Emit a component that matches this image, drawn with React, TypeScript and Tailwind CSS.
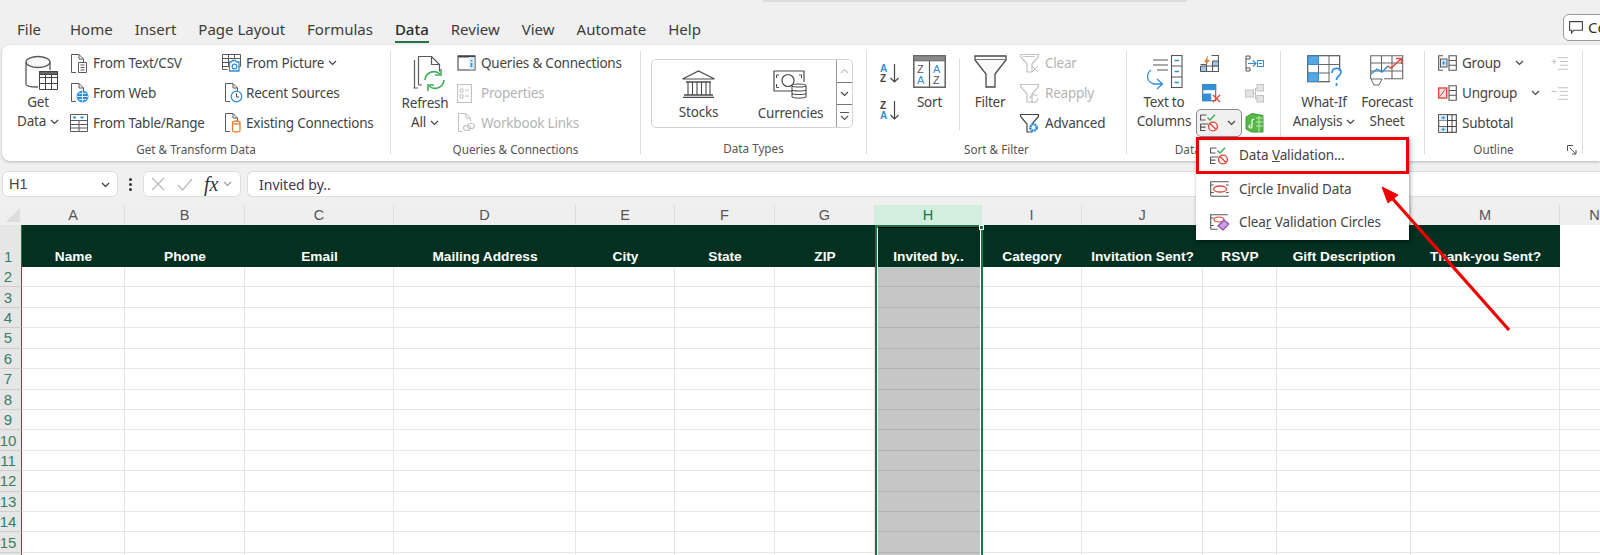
import React from 'react'

const GRAY = '#5a5a5a'
const LIGHT = '#c2c2c2'
const BLUE = '#2f8fd8'

const tabs = ['File', 'Home', 'Insert', 'Page Layout', 'Formulas', 'Data', 'Review', 'View', 'Automate', 'Help']

const columns = [
  { letter: 'A', title: 'Name' },
  { letter: 'B', title: 'Phone' },
  { letter: 'C', title: 'Email' },
  { letter: 'D', title: 'Mailing Address' },
  { letter: 'E', title: 'City' },
  { letter: 'F', title: 'State' },
  { letter: 'G', title: 'ZIP' },
  { letter: 'H', title: 'Invited by..' },
  { letter: 'I', title: 'Category' },
  { letter: 'J', title: 'Invitation Sent?' },
  { letter: 'K', title: 'RSVP' },
  { letter: 'L', title: 'Gift Description' },
  { letter: 'M', title: 'Thank-you Sent?' },
  { letter: 'N', title: '' },
]

const gridCols =
  'grid grid-cols-[22px_103px_120px_149px_182px_99px_100px_100px_107px_100px_121px_74px_134px_149px_70px]'

function Ic({ w, h, children, color = GRAY }: { w: number; h: number; children: React.ReactNode; color?: string }) {
  return (
    <svg width={w} height={h} viewBox={`0 0 ${w} ${h}`} fill="none" stroke={color} strokeWidth="1" className="shrink-0">
      {children}
    </svg>
  )
}

function Chevron({ color = '#444' }: { color?: string }) {
  return (
    <svg width="9" height="6" viewBox="0 0 9 6" fill="none" stroke={color} strokeWidth="1.2" className="shrink-0">
      <path d="M1 1l3.5 3.5L8 1" />
    </svg>
  )
}

const Page = ({ c = GRAY }: { c?: string }) => <path d="M1.5 18.5V.5H9l4.5 4.5v3M9 .5V5h4.5M1.5 18.5H6" stroke={c} />

const GetDataIcon = () => (
  <Ic w={34} h={36}>
    <path d="M1 7v22c0 2 4 3 11 3h1M25 7v8" strokeWidth="1.3" />
    <ellipse cx="13" cy="7" rx="12" ry="5.5" strokeWidth="1.3" fill="#f8f8f8" />
    <path d="M14.5 16.5h18v18h-18zM14.5 22.5h18M14.5 28.5h18M20.5 16.5v18M26.5 16.5v18" stroke="#444" fill="#fff" />
    <path d="M14.5 16.5h18v3h-18z" fill="#666" stroke="#444" />
  </Ic>
)
const FromTextIcon = () => (
  <Ic w={19} h={19}>
    <Page />
    <path d="M8.5 8.5h8v10h-8zM10.5 11h4M10.5 13.5h4M10.5 16h4" fill="#fff" />
  </Ic>
)
const FromWebIcon = () => (
  <Ic w={19} h={20}>
    <Page />
    <circle cx="12.5" cy="13.5" r="5.5" fill={BLUE} stroke={BLUE} />
    <path d="M7 13.5h11M12.5 8v11M9 10.5h7M9 16.5h7" stroke="#fff" strokeWidth="0.8" />
  </Ic>
)
const FromTableIcon = () => (
  <Ic w={18} h={18}>
    <path d="M.5.5h17v17H.5zM.5 6.5h17M.5 10.5h17M.5 14h17M9 6.5v11" />
    <path d="M3 3l1.5 1.5L6 3zM10.5 3L12 4.5 13.5 3z" fill={BLUE} stroke={BLUE} />
  </Ic>
)
const FromPictureIcon = () => (
  <Ic w={20} h={18}>
    <path d="M.5.5h18v12H.5M.5 4.5h18M.5 8.5h6M6.5.5v12M12.5.5v4M.5.5v15h5" />
    <path d="M7.5 8h2l1-1.5h3l1 1.5h2.5v9H7.5z" fill="#fff" stroke={BLUE} strokeWidth="1.3" />
    <circle cx="12.5" cy="12.5" r="2.3" stroke={BLUE} strokeWidth="1.3" />
  </Ic>
)
const RecentIcon = () => (
  <Ic w={19} h={20}>
    <Page />
    <circle cx="12.5" cy="13.5" r="5.3" fill="#fff" stroke={BLUE} strokeWidth="1.2" />
    <path d="M12.5 10.5v3.5h2.5" stroke="#444" />
  </Ic>
)
const ExistingIcon = () => (
  <Ic w={19} h={20}>
    <Page />
    <path d="M8.5 9.5c0-2 7.5-2 7.5 0v8c0 2-7.5 2-7.5 0zM8.5 9.5c0 2 7.5 2 7.5 0" stroke="#e8802c" strokeWidth="1.3" fill="#fff" />
  </Ic>
)
const RefreshIcon = () => (
  <Ic w={33} h={36}>
    <path d="M1.5 32V4M5 32H.5M5.5 29V.5h13l8 8v7M18.5.5v8h8M5.5 29H9" strokeWidth="1.2" />
    <path d="M12 24a9 9 0 0 1 15-6M31 24a9 9 0 0 1-15 6" stroke="#3fae5a" strokeWidth="1.6" />
    <path d="M28 13v6h-6M15 35v-6h6" stroke="#3fae5a" strokeWidth="1.6" />
  </Ic>
)
const QueriesIcon = () => (
  <Ic w={19} h={16}>
    <rect x="1" y="1" width="17" height="14" stroke="#555" strokeWidth="1.2" />
    <path d="M1 1.5h17" stroke="#444" strokeWidth="2" />
    <rect x="12" y="2" width="5.5" height="12.5" fill="#d9eaf7" stroke="none" />
    <path d="M14.5 5v1.5M14.5 8v4" stroke={BLUE} strokeWidth="1.6" />
  </Ic>
)
const PropertiesIcon = () => (
  <Ic w={15} h={19} color={LIGHT}>
    <rect x=".5" y=".5" width="14" height="18" strokeWidth="1.2" />
    <path d="M3 5h3v3H3zM3 11h3v3H3zM8 6h4M8 12h4" />
  </Ic>
)
const LinksIcon = () => (
  <Ic w={19} h={20} color={LIGHT}>
    <Page c={LIGHT} />
    <ellipse cx="10" cy="15" rx="3.5" ry="2.5" strokeWidth="1.2" />
    <ellipse cx="14" cy="13" rx="3.5" ry="2.5" strokeWidth="1.2" />
  </Ic>
)
const StocksIcon = () => (
  <Ic w={33} h={28} color="#4a4a4a">
    <path d="M.5 9L16.5 1l16 8z" strokeWidth="1.2" />
    <path d="M4 12h25M2 25h29M1 27.5h31" strokeWidth="1.3" />
    <path d="M6 12v13M10.5 12v13M15 12v13M19.5 12v13M24 12v13M28 12v13" strokeWidth="1.1" />
  </Ic>
)
const CurrenciesIcon = () => (
  <Ic w={36} h={30} color="#4a4a4a">
    <path d="M24 21H1V1h30v11" strokeWidth="1.2" />
    <path d="M6 5H3.5v3M3.5 14v3.5H6M26 5h2.5v3" />
    <circle cx="15" cy="10.5" r="6" strokeWidth="1.2" />
    <path d="M19 15.5c0-2 14-2 14 0v11c0 2-14 2-14 0zM19 15.5c0 2 14 2 14 0M19 19.5c0 2 14 2 14 0M19 23c0 2 14 2 14 0" fill="#fff" strokeWidth="1.1" />
  </Ic>
)
const SortSmall = ({ top, bottom, topColor, bottomColor }: { top: string; bottom: string; topColor: string; bottomColor: string }) => (
  <Ic w={20} h={21}>
    <text x="0" y="9" fontSize="10" fontFamily="Liberation Sans, sans-serif" fontWeight="700" fill={topColor} stroke="none">{top}</text>
    <text x="0" y="19" fontSize="10" fontFamily="Liberation Sans, sans-serif" fontWeight="700" fill={bottomColor} stroke="none">{bottom}</text>
    <path d="M14.5 1v18M10.5 15l4 4 4-4" stroke="#444" strokeWidth="1.2" />
  </Ic>
)
const SortIcon = () => (
  <Ic w={33} h={33} color="#555">
    <rect x=".8" y=".8" width="31.4" height="31.4" strokeWidth="1.4" />
    <rect x=".8" y=".8" width="31.4" height="5" fill="#8a8a8a" stroke="#666" />
    <path d="M16.5 6v26" strokeWidth="1.2" />
    <text x="4" y="18" fontSize="11" fontFamily="Liberation Sans, sans-serif" fill="#555" stroke="none">Z</text>
    <text x="4" y="29" fontSize="11" fontFamily="Liberation Sans, sans-serif" fill={BLUE} stroke="none">A</text>
    <text x="20" y="18" fontSize="11" fontFamily="Liberation Sans, sans-serif" fill={BLUE} stroke="none">A</text>
    <text x="20" y="29" fontSize="11" fontFamily="Liberation Sans, sans-serif" fill="#555" stroke="none">Z</text>
  </Ic>
)
const FilterIcon = () => (
  <Ic w={33} h={33} color="#4a4a4a">
    <path d="M1 1h31v4L21 19v13h-9V19L1 5z" strokeWidth="1.3" fill="#fafafa" />
    <path d="M1 4.5h31" stroke="#777" strokeWidth="1" />
  </Ic>
)
const Funnel = ({ c }: { c: string }) => <path d="M.5 .5h18v2L12 10v8H7v-8L.5 2.5z" stroke={c} strokeWidth="1.2" />
const ClearIcon = () => (
  <Ic w={20} h={19} color={LIGHT}>
    <Funnel c={LIGHT} />
    <path d="M12 12l6 6M18 12l-6 6M3 2.5l12 0" />
  </Ic>
)
const ReapplyIcon = () => (
  <Ic w={20} h={19} color={LIGHT}>
    <Funnel c={LIGHT} />
    <path d="M10 15a4 4 0 0 1 7-3M18 14a4 4 0 0 1-7 3" strokeWidth="1.2" />
  </Ic>
)
const AdvancedIcon = () => (
  <Ic w={20} h={19}>
    <Funnel c="#444" />
    <circle cx="13.5" cy="13.5" r="3.2" stroke={BLUE} strokeWidth="2.6" strokeDasharray="2 .6" fill="#fff" />
  </Ic>
)
const TextColumnsIcon = () => (
  <Ic w={37} h={36}>
    <path d="M7 5h15M7 10h15M11 15h11" stroke="#555" strokeWidth="1.2" />
    <path d="M5 17c-5 4-5 12 3 14h8M11 26l5.5 5-5.5 5" stroke={BLUE} strokeWidth="1.3" transform="translate(0 -2)" />
    <rect x="25.5" y=".5" width="10.5" height="32" stroke="#555" strokeWidth="1.1" />
    <path d="M25.5 11h10.5M25.5 22h10.5" stroke="#555" />
    <path d="M28.5 5.5h4.5M28.5 16.5h4.5M28.5 27.5h4.5" stroke={BLUE} strokeWidth="1.4" />
  </Ic>
)
const FlashFillIcon = () => (
  <Ic w={19} h={17}>
    <path d="M.5 9.5h6M.5 16.5h18V.5h-7M6.5 6v10.5M12.5 6v10.5M6.5 11h12" strokeWidth="1.1" />
    <path d="M8 .5L4 7h2.5l-1.5 4L10 5H7.5z" fill="#e8802c" stroke="none" />
    <path d="M.5 11h6v5.5H.5zM12.5 6h6v5h-6z" fill="#9cc7ea" stroke="#555" strokeWidth="1" />
  </Ic>
)
const DuplicatesIcon = () => (
  <Ic w={19} h={19}>
    <rect x=".7" y=".7" width="13" height="16" stroke="#555" />
    <rect x=".7" y=".7" width="13" height="5" fill={BLUE} stroke={BLUE} />
    <rect x=".7" y="10" width="8" height="6.7" fill={BLUE} stroke={BLUE} />
    <path d="M11 11l7 7M18 11l-7 7" stroke="#e0473a" strokeWidth="1.4" />
  </Ic>
)
const ValidationIcon = () => (
  <Ic w={19} h={18}>
    <path d="M.5 1h6M.5 1v5h5M.5 10h8M.5 10v6.5h5M.5 13.2h5" stroke="#555" strokeWidth="1.2" />
    <path d="M7.5 3.5l2.5 2.5L15 .7" stroke="#3fae5a" strokeWidth="1.5" />
    <circle cx="13" cy="12.5" r="4.4" stroke="#e0473a" strokeWidth="1.4" fill="#fff" />
    <path d="M10 9.5l6 6" stroke="#e0473a" strokeWidth="1.4" />
  </Ic>
)
const ConsolidateIcon = () => (
  <Ic w={19} h={17}>
    <path d="M5 1H1v15h4M5 1v3H1M5 16v-3H1" stroke="#555" />
    <path d="M3 8.5h8M8 5.5l3 3-3 3" stroke={BLUE} strokeWidth="1.2" />
    <rect x="12.5" y="5.5" width="6" height="6" stroke={BLUE} />
    <path d="M14 8.5h3" stroke={BLUE} />
  </Ic>
)
const RelationshipsIcon = () => (
  <Ic w={19} h={19} color={LIGHT}>
    <rect x=".5" y="6" width="8" height="7" fill="#e4e4e4" />
    <rect x="12" y=".5" width="6.5" height="6.5" fill="#e4e4e4" />
    <rect x="12" y="11.5" width="6.5" height="6.5" fill="#e4e4e4" />
    <path d="M8.5 9.5h2M10.5 4v11h1.5M10.5 4H12" />
  </Ic>
)
const ModelIcon = () => (
  <Ic w={19} h={20}>
    <path d="M1 4l6-3.5 11 2V19H6.5L1 16z" fill="#56b947" stroke="#3c9a38" />
    <path d="M11 5h7M11 9h7M11 13h7M14 3v16" stroke="#d6f0cf" strokeWidth="0.8" />
    <path d="M7 7v6.5a1.5 1.5 0 1 1-1.5-1.5M7 7l2-1" stroke="#fff" strokeWidth="1.2" />
  </Ic>
)
const WhatIfIcon = () => (
  <Ic w={37} h={34}>
    <rect x=".7" y=".7" width="32" height="26" stroke="#555" strokeWidth="1.2" />
    <path d="M11.5.7v26M22 .7v26M.7 9.5h32M.7 18h32" stroke="#666" />
    <rect x="1" y="1" width="10.5" height="8.5" fill="#5aa5e0" stroke={BLUE} />
    <rect x="1" y="18" width="10.5" height="8.5" fill="#5aa5e0" stroke={BLUE} />
    <rect x="23" y="16" width="14" height="18" fill="#fff" stroke="none" />
    <path d="M25 18c0-6 9-6 9-1 0 4-4.5 4-4.5 8M29.5 28v3" stroke={BLUE} strokeWidth="1.7" />
  </Ic>
)
const ForecastIcon = () => (
  <Ic w={34} h={31}>
    <path d="M.7 24V.7h32v23H14M.7 8h32M.7 16h32M11.5.7V16M22 .7v23" stroke="#666" strokeWidth="1.1" />
    <path d="M1 19l6-5 5 3 6-6" stroke={BLUE} strokeWidth="1.4" />
    <path d="M18 11l3 2 10-9M26 3.5h5.5V9" stroke="#e0473a" strokeWidth="1.4" />
    <path d="M1 24h11l-3 6H4z" fill="#fff" stroke="#666" />
  </Ic>
)
const GroupIcon = () => (
  <Ic w={19} h={16}>
    <path d="M11 .7h7.3v14.6H11zM11 5.5h7.3M11 10.3h7.3M5 .7H.7v14.6H5" stroke="#555" strokeWidth="1.1" />
    <rect x="2.5" y="4" width="6.5" height="8" fill="#d8e8f5" stroke="#555" />
    <path d="M4 8h3.5M5.7 6v4" stroke={BLUE} />
  </Ic>
)
const UngroupIcon = () => (
  <Ic w={19} h={16}>
    <path d="M11 .7h7.3v14.6H11zM11 5.5h7.3M11 10.3h7.3" stroke="#555" strokeWidth="1.1" />
    <rect x=".7" y="3" width="8" height="10" fill="#fbe3e1" stroke="#e0473a" strokeWidth="1.4" />
    <path d="M2 11.5l5-7" stroke="#e0473a" />
  </Ic>
)
const SubtotalIcon = () => (
  <Ic w={19} h={19}>
    <rect x=".7" y=".7" width="17.6" height="17.6" stroke="#444" strokeWidth="1.1" />
    <path d="M9.5.7v17.6M14 .7v17.6M.7 6.5h17.6M.7 12.5h17.6" stroke="#444" />
    <rect x="1" y="1" width="8" height="5.5" fill="#dbeaf6" stroke="none" />
    <rect x="1" y="12.8" width="8" height="5.2" fill="#dbeaf6" stroke="none" />
    <path d="M3.5 3.7h3.5M5.2 2v3.4M3.5 15.4h3.5M5.2 13.7v3.4" stroke={BLUE} />
  </Ic>
)
const DetailIcon = ({ plus }: { plus: boolean }) => (
  <Ic w={17} h={13} color={LIGHT}>
    <path d="M7 .7h10M9 4.5h8M9 8.3h8M7 12.2h10" strokeWidth="1.1" />
    <path d={plus ? 'M.5 4.5h5M3 2v5' : 'M.5 4.5h5'} strokeWidth="1.1" />
  </Ic>
)
const CircleInvalidIcon = () => (
  <Ic w={19} h={16}>
    <path d="M.7 15V.7h18M.7 15.3h18M.7 4h3M.7 11.5h3M16 4h2.7M16 11.5h2.7" stroke="#555" strokeWidth="1.1" />
    <ellipse cx="10" cy="8" rx="6.5" ry="3" stroke="#e0473a" strokeWidth="1.3" />
  </Ic>
)
const ClearCirclesIcon = () => (
  <Ic w={19} h={17}>
    <path d="M.7 15V.7h17M.7 15.3h7M.7 4h3M.7 11.5h3" stroke="#555" strokeWidth="1.1" />
    <ellipse cx="9" cy="5.5" rx="5" ry="2.5" stroke="#e0473a" strokeWidth="1.1" />
    <path d="M8 12l6-6 5 4-6 6z" fill="#c9a0dc" stroke="#8e44ad" strokeWidth="1.1" />
  </Ic>
)

function SmallRow({ icon, label, width, disabled, chevron }: { icon: React.ReactNode; label: string; width: string; disabled?: boolean; chevron?: boolean }) {
  return (
    <div className={`flex h-[30px] items-center whitespace-nowrap ${disabled ? 'text-[#b4b4b4]' : 'text-[#444]'}`}>
      <div className={`flex shrink-0 items-center ${width}`}>{icon}</div>
      <span className="pt-[1px]">{label}</span>
      {chevron && (
        <span className="ml-[14px]">
          <Chevron />
        </span>
      )}
    </div>
  )
}

function BigButton({ icon, lines, className, chevron }: { icon: React.ReactNode; lines: string[]; className: string; chevron?: boolean }) {
  return (
    <div className={`flex shrink-0 flex-col items-center text-[#444] ${className}`}>
      <div className="flex h-[45px] items-start justify-center pt-[7px]">{icon}</div>
      {lines.map((line, i) => (
        <div key={line} className="flex items-center gap-[4px] whitespace-nowrap leading-[19px]">
          {line}
          {chevron && i === lines.length - 1 && <Chevron />}
        </div>
      ))}
    </div>
  )
}

function Group({ label, className, children, launcher }: { label: string; className: string; children: React.ReactNode; launcher?: boolean }) {
  return (
    <>
      <div className={`flex shrink-0 flex-col ${className}`}>
        <div className="flex h-[90px]">{children}</div>
        <div className="flex h-[24px] items-center text-[11.7px] tracking-normal text-[#555]">
          <div className="flex-1 text-center">{label}</div>
          {launcher && (
            <div className="flex w-[20px] justify-center">
              <svg width="10" height="10" viewBox="0 0 10 10" fill="none" stroke="#555">
                <path d="M.5 6V.5H6M3 3l6 6M5 9h4V5" />
              </svg>
            </div>
          )}
        </div>
      </div>
      <div className="mt-[3px] h-[103px] w-px shrink-0 bg-[#dddddd]" />
    </>
  )
}

function Ribbon() {
  return (
    <div className="ml-[2px] flex h-[116px] rounded-l-[8px] bg-white pt-[3px] text-[13.5px] tracking-[-0.22px] shadow-[0_1px_3px_rgba(0,0,0,0.25)]">
      <Group label="Get &amp; Transform Data" className="w-[388px]">
        <BigButton icon={<span className="ml-[8px]"><GetDataIcon /></span>} lines={['Get', 'Data']} chevron className="ml-[4px] w-[64px]" />
        <div className="w-[151px]">
          <SmallRow icon={<FromTextIcon />} label="From Text/CSV" width="w-[23px]" />
          <SmallRow icon={<FromWebIcon />} label="From Web" width="w-[23px]" />
          <SmallRow icon={<FromTableIcon />} label="From Table/Range" width="w-[23px]" />
        </div>
        <div>
          <div className="flex h-[30px] items-center">
            <SmallRow icon={<span className="ml-[1px]"><FromPictureIcon /></span>} label="From Picture" width="w-[25px]" />
            <span className="ml-[4px]">
              <Chevron />
            </span>
          </div>
          <SmallRow icon={<span className="ml-[3px]"><RecentIcon /></span>} label="Recent Sources" width="w-[25px]" />
          <SmallRow icon={<span className="ml-[3px]"><ExistingIcon /></span>} label="Existing Connections" width="w-[25px]" />
        </div>
      </Group>
      <Group label="Queries &amp; Connections" className="w-[249px]">
        <BigButton icon={<span className="ml-[8px]"><RefreshIcon /></span>} lines={['Refresh', 'All']} chevron className="ml-[6px] w-[56px] pt-[1px]" />
        <div className="ml-[4px]">
          <SmallRow icon={<QueriesIcon />} label="Queries &amp; Connections" width="w-[24px]" />
          <SmallRow icon={<PropertiesIcon />} label="Properties" width="w-[24px]" disabled />
          <SmallRow icon={<LinksIcon />} label="Workbook Links" width="w-[24px]" disabled />
        </div>
      </Group>
      <Group label="Data Types" className="w-[225px]">
        <div className="ml-[10px] mt-[11px] flex h-[69px] w-[202px] rounded-[5px] border border-[#d4d4d4] text-[#444]">
          <div className="flex w-[93px] flex-col items-center pt-[10px]">
            <StocksIcon />
            <div className="mt-[4px]">Stocks</div>
          </div>
          <div className="flex w-[91px] flex-col items-center pt-[10px]">
            <CurrenciesIcon />
            <div className="mt-[3px]">Currencies</div>
          </div>
          <div className="flex flex-1 flex-col border-l border-[#9a9a9a]">
            <div className="flex flex-1 items-center justify-center">
              <svg width="9" height="6" viewBox="0 0 9 6" fill="none" stroke="#c4c4c4" strokeWidth="1.2">
                <path d="M1 5l3.5-3.5L8 5" />
              </svg>
            </div>
            <div className="flex h-[23px] items-center justify-center border-y border-[#777]">
              <Chevron />
            </div>
            <div className="flex flex-1 flex-col items-center justify-center gap-[2px]">
              <div className="h-px w-[9px] bg-[#555]" />
              <Chevron color="#555" />
            </div>
          </div>
        </div>
      </Group>
      <Group label="Sort &amp; Filter" className="w-[259px]">
        <div className="ml-[13px] flex w-[20px] shrink-0 flex-col pt-[15px]">
          <SortSmall top="A" bottom="Z" topColor={BLUE} bottomColor="#444" />
          <div className="mt-[16px]">
            <SortSmall top="Z" bottom="A" topColor="#444" bottomColor={BLUE} />
          </div>
        </div>
        <BigButton icon={<SortIcon />} lines={['Sort']} className="w-[59px]" />
        <div className="mt-[10px] h-[72px] w-px shrink-0 bg-[#dddddd]" />
        <BigButton icon={<FilterIcon />} lines={['Filter']} className="w-[60px]" />
        <div>
          <SmallRow icon={<ClearIcon />} label="Clear" width="w-[25px]" disabled />
          <SmallRow icon={<ReapplyIcon />} label="Reapply" width="w-[25px]" disabled />
          <SmallRow icon={<AdvancedIcon />} label="Advanced" width="w-[25px]" />
        </div>
      </Group>
      <Group label="Data Tools" className="w-[153px]">
        <BigButton icon={<TextColumnsIcon />} lines={['Text to', 'Columns']} className="w-[69px] pl-[5px]" />
        <div className="w-[49px] shrink-0">
          <div className="flex h-[30px] items-center pl-[4px]">
            <FlashFillIcon />
          </div>
          <div className="flex h-[30px] items-center pl-[6px]">
            <DuplicatesIcon />
          </div>
          <div className="mt-[1px] flex h-[28px] w-[46px] items-center gap-[8px] rounded-[5px] border border-[#8a8a8a] bg-[#f0f0f0] pl-[3px]">
            <ValidationIcon />
            <Chevron />
          </div>
        </div>
        <div>
          <div className="flex h-[30px] items-center">
            <ConsolidateIcon />
          </div>
          <div className="flex h-[30px] items-center">
            <RelationshipsIcon />
          </div>
          <div className="flex h-[30px] items-center">
            <ModelIcon />
          </div>
        </div>
      </Group>
      <Group label="Forecast" className="w-[143px]">
        <BigButton icon={<span className="ml-[2px]"><WhatIfIcon /></span>} lines={['What-If', 'Analysis']} chevron className="ml-[7px] w-[72px]" />
        <BigButton icon={<ForecastIcon />} lines={['Forecast', 'Sheet']} className="w-[54px]" />
      </Group>
      <Group label="Outline" className="w-[157px]" launcher>
        <div className="ml-[13px] w-[113px]">
          <SmallRow icon={<GroupIcon />} label="Group" width="w-[24px]" chevron />
          <SmallRow icon={<UngroupIcon />} label="Ungroup" width="w-[24px]" chevron />
          <SmallRow icon={<SubtotalIcon />} label="Subtotal" width="w-[24px]" />
        </div>
        <div>
          <div className="flex h-[30px] items-center">
            <DetailIcon plus />
          </div>
          <div className="flex h-[30px] items-center">
            <DetailIcon plus={false} />
          </div>
        </div>
      </Group>
    </div>
  )
}

function FormulaBar() {
  return (
    <div className="mt-[10px] flex h-[26px] text-[14px] text-[#444]">
      <div className="ml-[2px] flex w-[116px] items-center justify-between rounded-[6px] border border-[#dedede] bg-white pl-[6px] pr-[7px] pt-[1px] font-['Liberation_Sans',sans-serif] text-[14.5px]">
        H1
        <Chevron color="#333" />
      </div>
      <div className="flex w-[25px] flex-col items-center justify-center gap-[2px]">
        <div className="size-[3px] rounded-full bg-[#333]" />
        <div className="size-[3px] rounded-full bg-[#333]" />
        <div className="size-[3px] rounded-full bg-[#333]" />
      </div>
      <div className="flex w-[98px] items-center rounded-[6px] border border-[#dedede] bg-white pl-[7px]">
        <svg width="14" height="14" viewBox="0 0 14 14" fill="none" stroke="#b8b8b8" strokeWidth="1.2" className="shrink-0">
          <path d="M1 1l12 12M13 1L1 13" />
        </svg>
        <svg width="16" height="13" viewBox="0 0 16 13" fill="none" stroke="#b8b8b8" strokeWidth="1.2" className="ml-[12px] shrink-0">
          <path d="M1 7l4.5 5L15 1" />
        </svg>
        <span className="ml-[11px] font-['Liberation_Serif',serif] text-[20px] italic leading-none text-[#333]">fx</span>
        <span className="ml-[5px]">
          <Chevron color="#999" />
        </span>
      </div>
      <div className="ml-[6px] flex flex-1 items-center rounded-l-[6px] border border-r-0 border-[#dedede] bg-white pl-[11px] pt-[1px] text-[#3f3554]">
        Invited by..
      </div>
    </div>
  )
}

function Sheet() {
  return (
    <div className="mt-[8px] font-['Liberation_Sans',sans-serif]">
      <div className={`${gridCols} h-[20px] bg-[#efefef]`}>
        <div className="flex items-end justify-end pb-[3px] pr-[2px]">
          <div className="size-0 border-b-[14px] border-l-[14px] border-b-[#dcdcdc] border-l-transparent" />
        </div>
        {columns.map((c) => (
          <div
            key={c.letter}
            className={`flex items-center justify-center border-r border-[#dedede] text-[14.5px] leading-none ${
              c.letter === 'H' ? 'bg-[#d2eedd] text-[#217346]' : 'text-[#555]'
            }`}
          >
            {c.letter}
          </div>
        ))}
      </div>
      <div className={`${gridCols} h-[42px]`}>
        <div className="flex items-end border-r border-[#1e7145] bg-[#e6e6e6] pb-[1px] pl-[4px] text-[15px] leading-[18px] text-[#34806a]">1</div>
        {columns.map((c) => (
          <div
            key={c.letter}
            className={`flex items-end justify-center pb-[2px] text-[13.7px] font-bold leading-[16px] text-white ${
              c.letter === 'N' ? 'bg-white' : 'bg-[#033020]'
            }`}
          >
            {c.title}
          </div>
        ))}
      </div>
      {Array.from({ length: 15 }, (_, i) => i + 2).map((row) => (
        <div key={row} className={`${gridCols} h-[20.43px]`}>
          <div className="flex items-center justify-center border-b border-r border-b-[#cfcfcf] border-r-[#1e7145] bg-[#e6e6e6] pr-[5px] text-[15px] leading-none text-[#34806a]">
            {row < 16 && row}
          </div>
          {columns.map((c) => (
            <div
              key={c.letter}
              className={`border-b border-r ${
                c.letter === 'H' ? 'border-b-[#b2b2b2] border-r-transparent bg-[#c6c6c6]' : 'border-[#e6e6e6] bg-white'
              }`}
            />
          ))}
        </div>
      ))}
    </div>
  )
}

function ValidationMenu() {
  return (
    <div className="absolute left-[1196px] top-[137px] w-[213px] bg-white text-[13.5px] tracking-[-0.1px] text-[#444] shadow-[1px_2px_4px_rgba(0,0,0,0.4)]">
      <div className="flex h-[37px] items-center border-[3px] border-[#f00000] pl-[11px]">
        <span className="w-[29px]">
          <ValidationIcon />
        </span>
        <span>
          Data <span className="underline">V</span>alidation...
        </span>
      </div>
      <div className="flex h-[30px] items-center pl-[14px]">
        <span className="w-[29px]">
          <CircleInvalidIcon />
        </span>
        <span>
          C<span className="underline">i</span>rcle Invalid Data
        </span>
      </div>
      <div className="flex h-[36px] items-center pl-[14px]">
        <span className="w-[29px]">
          <ClearCirclesIcon />
        </span>
        <span>
          Clea<span className="underline">r</span> Validation Circles
        </span>
      </div>
    </div>
  )
}

export default function App() {
  return (
    <div className="relative h-[555px] w-[1600px] overflow-hidden bg-[#f0f0f0] font-['Noto_Sans',sans-serif]">
      <div className="ml-[763px] h-[2px] w-[424px] bg-[#dcdcdc]" />
      <div className="flex h-[43px] items-start justify-between">
        <div className="flex gap-[22px] pl-[17px] pt-[16px] text-[15px] leading-[22px] text-[#3c3c3c]">
          {tabs.map((tab) => (
            <div key={tab} className={`relative ${tab === 'File' ? 'mr-[7px]' : ''} ${tab === 'Data' ? 'font-medium text-[#2b2b2b]' : ''}`}>
              {tab}
              {tab === 'Data' && <div className="absolute inset-x-0 top-[23px] h-[2px] bg-[#217346]" />}
            </div>
          ))}
        </div>
        <div className="mt-[12px] -mr-[13px] flex h-[27px] w-[50px] items-center gap-[5px] overflow-hidden rounded-[6px] border border-[#9a9a9a] bg-white pl-[5px] text-[15px] text-[#333]">
          <svg width="14" height="13" viewBox="0 0 14 13" fill="none" stroke="#444" strokeWidth="1.1" className="shrink-0">
            <path d="M.6.6h12.8v8.6H5L2.5 12V9.2H.6z" />
          </svg>
          Co
        </div>
      </div>
      <Ribbon />
      <FormulaBar />
      <Sheet />

      {/* selected column H */}
      <div className="absolute bottom-0 left-[875px] top-[225px] w-[108px] border-2 border-b-0 border-[#1e7145]">
        <div className="h-full border-x border-t border-x-white border-t-black" />
        <div className="absolute -right-[3px] -top-[2px] size-[5px] border border-white bg-[#1e7145]" />
      </div>

      <ValidationMenu />

      {/* annotation arrow */}
      <svg width="1600" height="555" className="pointer-events-none absolute left-0 top-0" fill="none">
        <path d="M1509 330L1392 198" stroke="#f00000" strokeWidth="3.2" />
        <path d="M1382 187l16 8-10 8z" fill="#f00000" stroke="#f00000" strokeWidth="1" />
      </svg>
    </div>
  )
}
